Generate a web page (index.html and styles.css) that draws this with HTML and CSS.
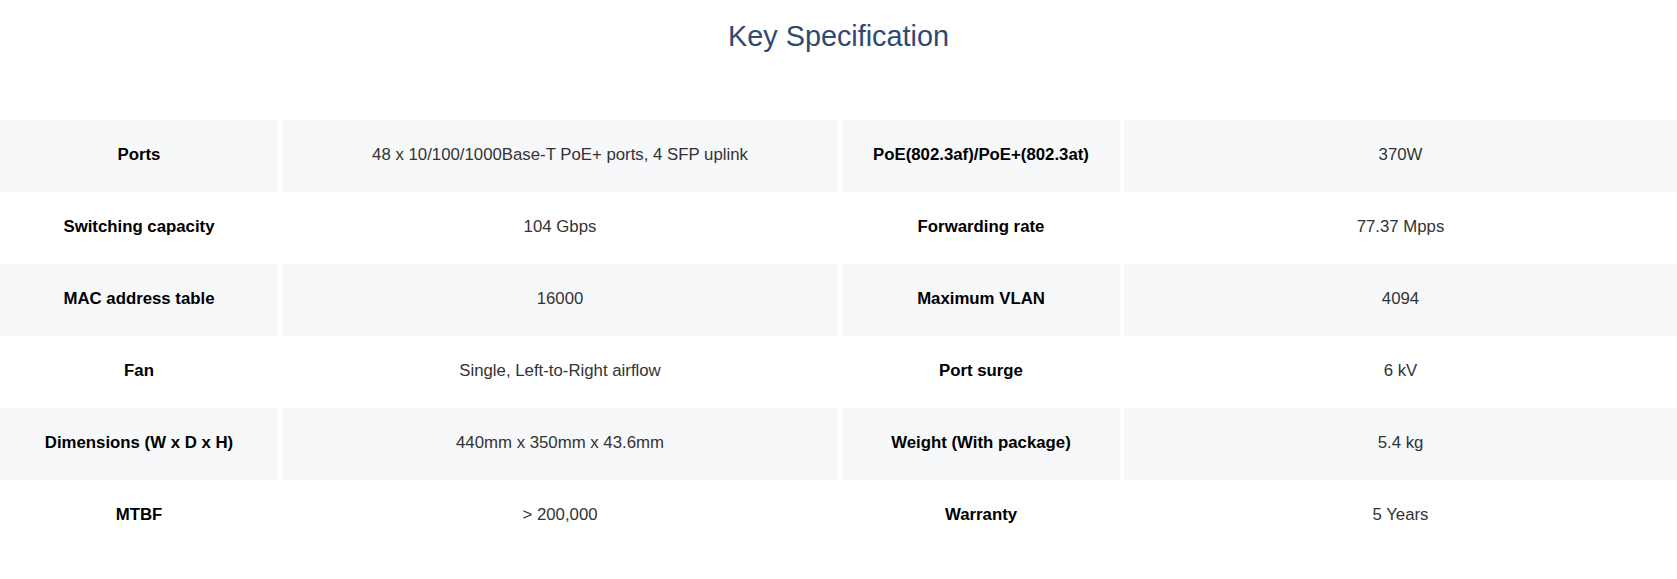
FILE: index.html
```html
<!DOCTYPE html>
<html lang="en">
<head>
<meta charset="utf-8">
<title>Key Specification</title>
<link rel="stylesheet" href="styles.css">
</head>
<body>
<section class="spec">
  <h2 class="spec-title">Key Specification</h2>
  <div class="spec-table">
    <div class="spec-row alt">
      <div class="cell label">Ports</div>
      <div class="cell value">48 x 10/100/1000Base-T PoE+ ports, 4 SFP uplink</div>
      <div class="cell label">PoE(802.3af)/PoE+(802.3at)</div>
      <div class="cell value">370W</div>
    </div>
    <div class="spec-row">
      <div class="cell label">Switching capacity</div>
      <div class="cell value">104 Gbps</div>
      <div class="cell label">Forwarding rate</div>
      <div class="cell value">77.37 Mpps</div>
    </div>
    <div class="spec-row alt">
      <div class="cell label">MAC address table</div>
      <div class="cell value">16000</div>
      <div class="cell label">Maximum VLAN</div>
      <div class="cell value">4094</div>
    </div>
    <div class="spec-row">
      <div class="cell label">Fan</div>
      <div class="cell value">Single, Left-to-Right airflow</div>
      <div class="cell label">Port surge</div>
      <div class="cell value">6 kV</div>
    </div>
    <div class="spec-row alt">
      <div class="cell label">Dimensions (W x D x H)</div>
      <div class="cell value">440mm x 350mm x 43.6mm</div>
      <div class="cell label">Weight (With package)</div>
      <div class="cell value">5.4 kg</div>
    </div>
    <div class="spec-row">
      <div class="cell label">MTBF</div>
      <div class="cell value">&gt; 200,000</div>
      <div class="cell label">Warranty</div>
      <div class="cell value">5 Years</div>
    </div>
  </div>
</section>
</body>
</html>
```

FILE: styles.css
```css
html, body {
  margin: 0;
  padding: 0;
  background: #ffffff;
}

body {
  font-family: "Liberation Sans", Arial, sans-serif;
  color: #333333;
}

.spec {
  padding-top: 19px;
}

.spec-title {
  margin: 0 0 67px;
  font-size: 28.8px;
  line-height: 34px;
  font-weight: normal;
  text-align: center;
  color: #2f4a70;
}

.spec-table {
  display: flex;
  flex-direction: column;
}

.spec-row {
  display: grid;
  grid-template-columns: 278px 556px 278px 1fr;
  column-gap: 4px;
  height: 72px;
}

.cell {
  display: flex;
  align-items: center;
  justify-content: center;
  text-align: center;
  font-size: 16.8px;
  line-height: 20px;
  padding-bottom: 2px;
}

.spec-row.alt .cell {
  background: #f7f8fa;
}

.label {
  font-weight: bold;
  color: #000000;
}

.value {
  color: #333333;
}
```
